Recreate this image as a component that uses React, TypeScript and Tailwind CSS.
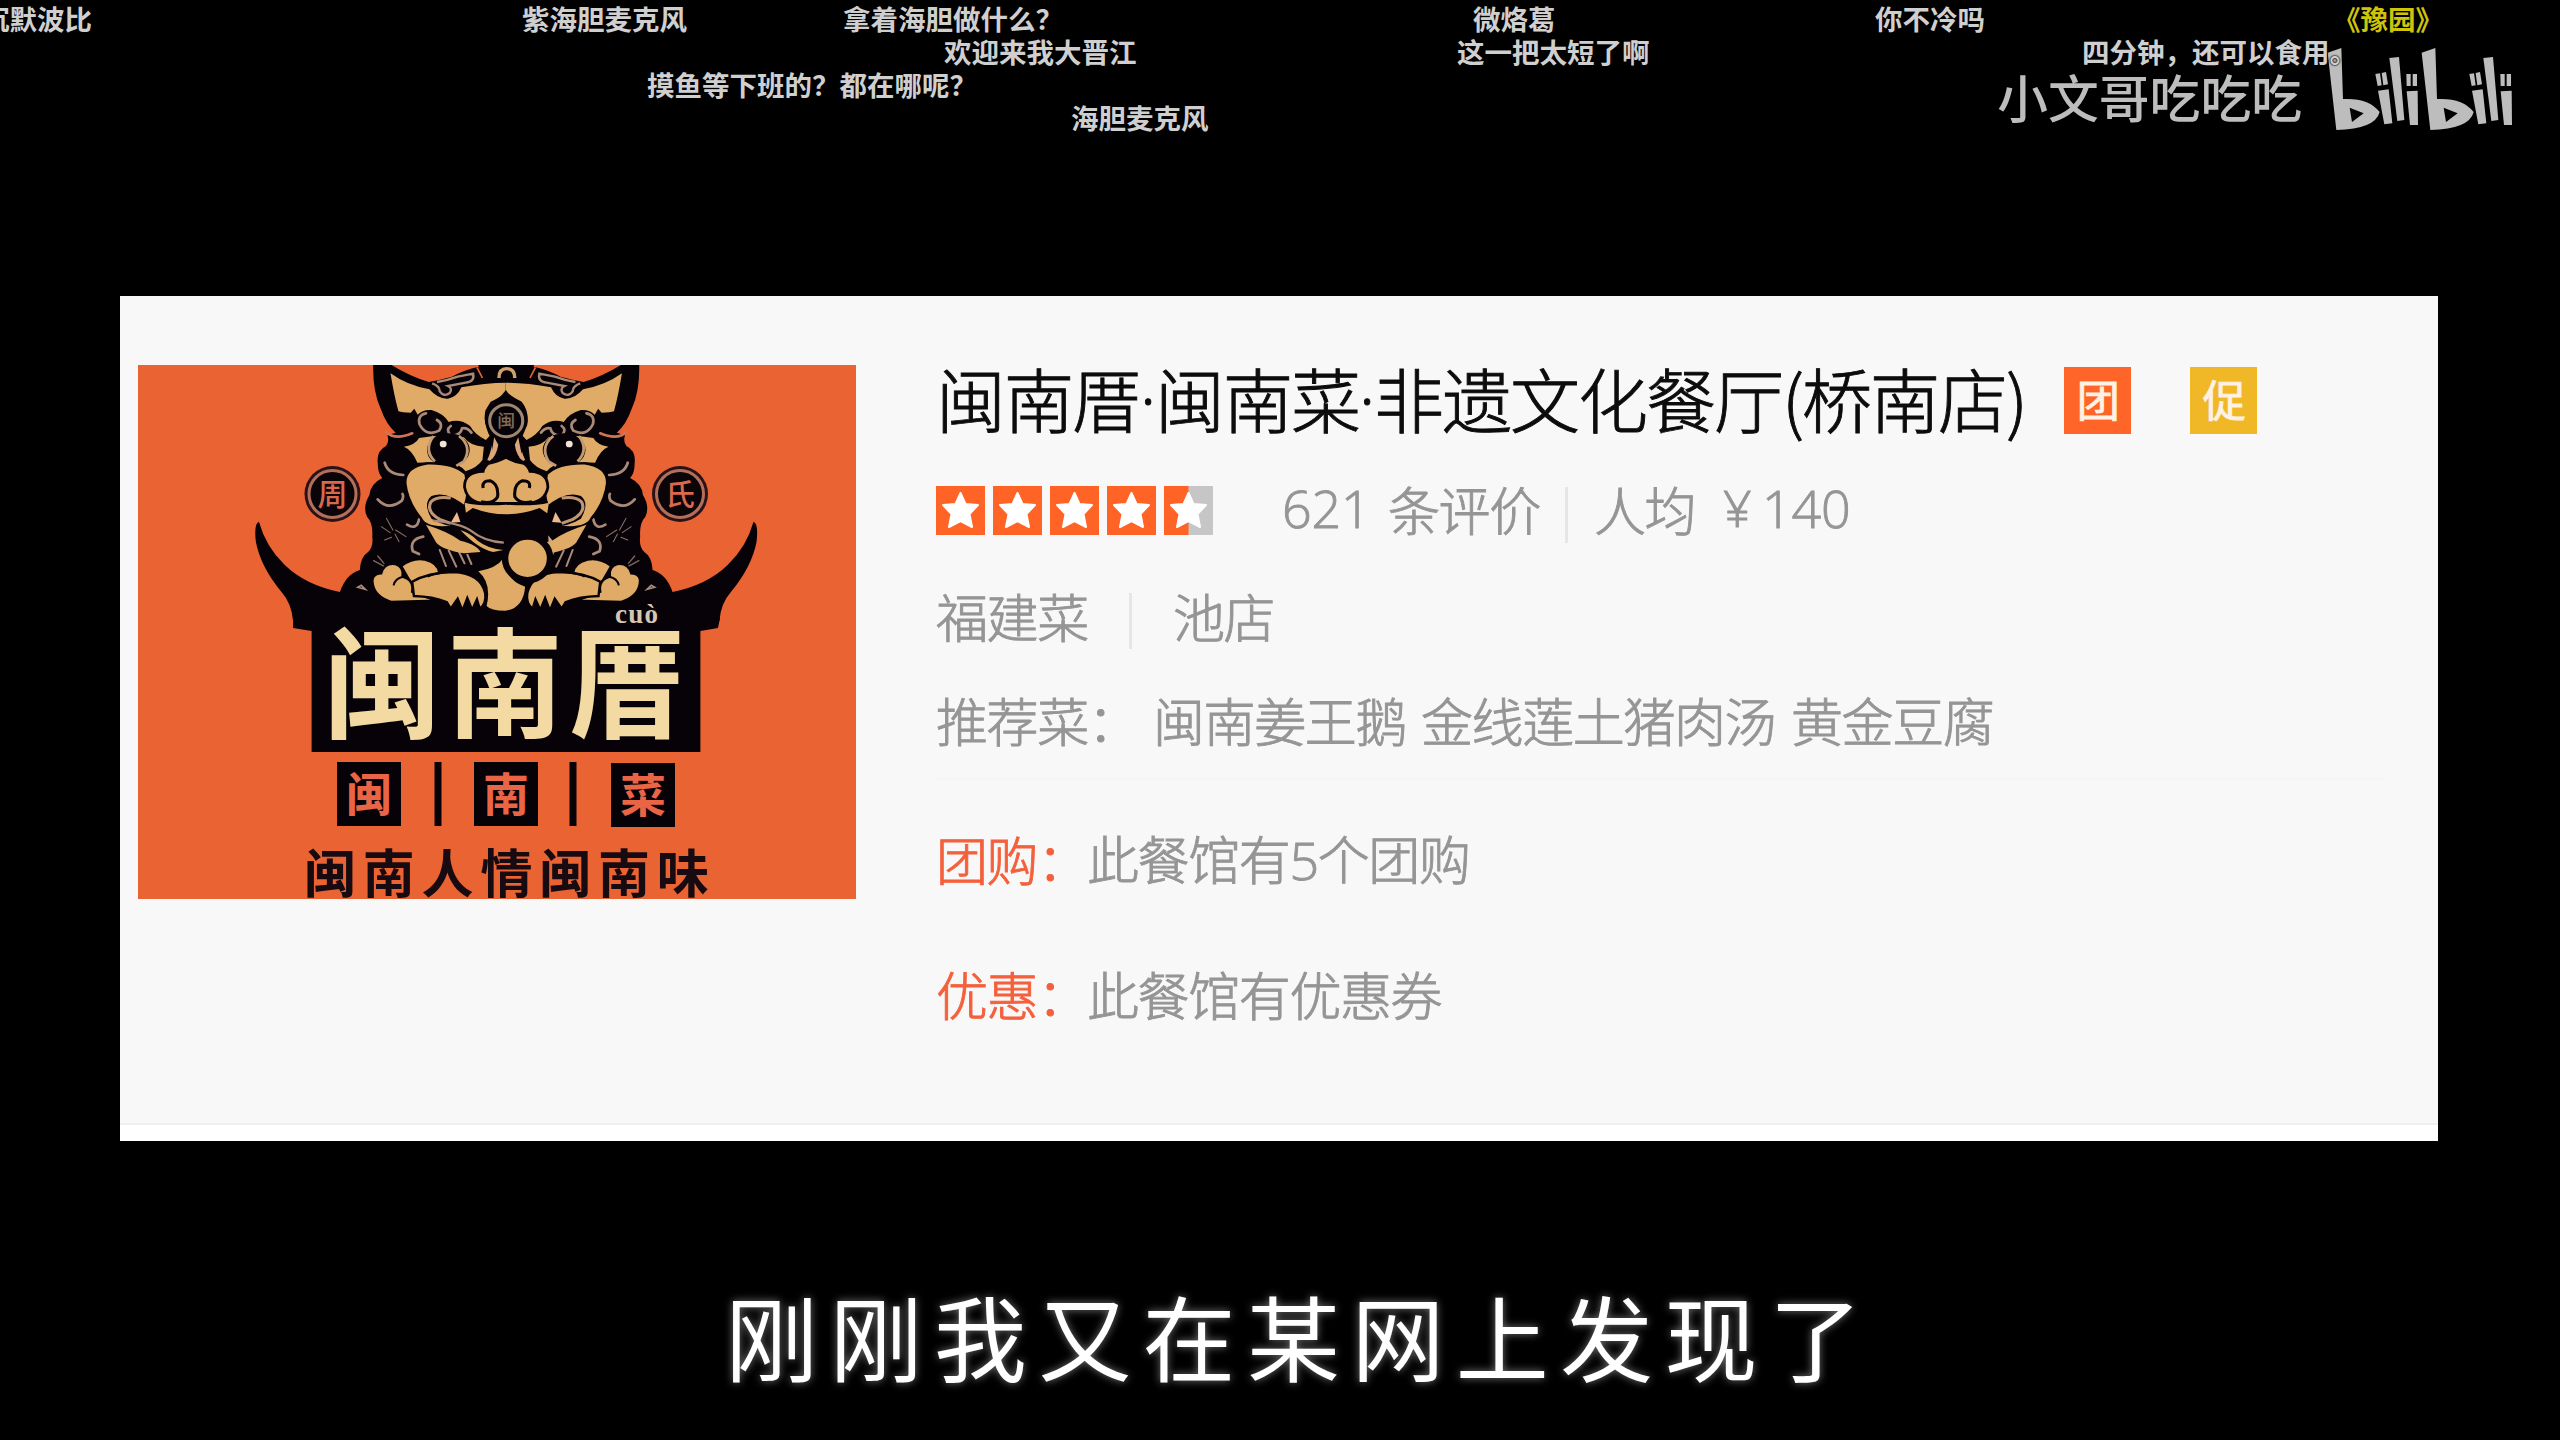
import React from "react";

const CJK = "font-['Noto_Sans_CJK_SC',sans-serif]";

type Comment = { text: string; place: string; color?: string };

const comments: Comment[] = [
  { text: "沉默波比", place: "left-[-18px] top-0" },
  { text: "紫海胆麦克风", place: "left-[522px] top-0" },
  { text: "拿着海胆做什么？", place: "left-[843px] top-0" },
  { text: "微烙葛", place: "left-[1473px] top-0" },
  { text: "你不冷吗", place: "left-[1875px] top-0" },
  { text: "《豫园》", place: "left-[2333px] top-0", color: "text-[#cfc40a]" },
  { text: "欢迎来我大晋江", place: "left-[944px] top-[33px]" },
  { text: "这一把太短了啊", place: "left-[1457px] top-[33px]" },
  { text: "四分钟，还可以食用。", place: "left-[2082px] top-[33px]" },
  { text: "摸鱼等下班的？都在哪呢？", place: "left-[647px] top-[66px]" },
  { text: "海胆麦克风", place: "left-[1071px] top-[99px]" },
];

function Danmaku() {
  return (
    <div className="absolute inset-x-0 top-0 h-[140px] overflow-hidden">
      {comments.map((c) => (
        <span
          key={c.text}
          className={`absolute whitespace-nowrap text-[27.5px] leading-[36px] font-bold [text-shadow:0_0_2px_#000,0_0_2px_#000] ${c.color ?? "text-[#cfcfcf]"} ${c.place}`}
        >
          {c.text}
        </span>
      ))}
    </div>
  );
}

function BiliHalf() {
  return (
    <>
      <path d="M82 68 L123 54 L128 207 Q205 203 238 246 Q225 297 108 300 Z M148 233 L155 276 L190 250 Z" fillRule="evenodd" />
      <path d="M225 132 L239 130 L244 166 L232 168 Z M244 129 L257 126 L263 163 L249 166 Z" />
      <path d="M233 182 L265 178 L276 280 L252 283 Z" />
      <path d="M267 84 L296 81 L312 270 L291 273 Z" />
      <path d="M318 132 L331 132 L331 168 L319 168 Z M337 132 L350 132 L350 168 L337 168 Z" />
      <path d="M319 184 L352 182 L353 285 L329 285 Z" />
    </>
  );
}

function Watermark() {
  return (
    <div className="absolute right-[44px] top-[46px] flex items-start text-[#bdbdbd]">
      <span className="mt-[15px] mr-[25px] whitespace-nowrap text-[50.8px] leading-[70px] font-medium">小文哥吃吃吃</span>
      <svg width="189" height="86" viewBox="80 48 567 258" fill="currentColor">
        <BiliHalf />
        <g transform="translate(282 0)">
          <BiliHalf />
        </g>
      </svg>
    </div>
  );
}

function LionHalf() {
  const tan = "#e0ab66";
  const dim = "#a98a78";
  return (
    <g>
      {/* mane, ear and roof horn */}
      <path
        fill="#060208"
        d="M775 40 L387 40 Q384 120 408 175 Q425 225 452 248 L428 256 Q434 275 424 288 Q396 302 400 340 Q400 370 413 384 Q378 402 376 435 Q355 470 369 500 Q387 520 384 560 Q388 590 372 606 Q350 620 348 660 Q308 672 290 726 Q190 705 130 645 Q75 590 55 515 Q40 520 46 575 Q60 650 120 725 Q150 760 154 812 L775 812 Z"
      />
      <path d="M432 40 Q490 78 548 96 Q580 90 615 80 Q650 60 694 50 L690 40 Z" fill="#ea6132" />
      {/* ear and brow */}
      <path
        fill={tan}
        d="M437 70 Q485 106 550 118 Q575 148 604 146 Q630 142 643 112 Q710 98 775 98 L775 125 Q750 145 728 155 Q706 185 712 220 L728 254 L714 270 Q682 254 668 228 Q640 205 606 216 Q590 190 556 180 Q530 178 516 194 L506 176 L496 188 Q470 188 460 184 Q448 140 437 70 Z"
      />
      <path d="M558 100 Q580 108 580 124 Q592 142 609 129 Q618 115 604 108 L655 98 Q682 96 677 71 L632 80 Q600 92 572 96" fill="none" stroke={dim} strokeWidth="7" />
      <path d="M688 52 L704 84" stroke="#ea6132" strokeWidth="5" />
      <g fill="none" stroke={dim} strokeWidth="8" strokeLinecap="round">
        <path d="M540 190 Q515 195 521 222 Q540 262 578 242 Q592 222 572 210" />
        <path d="M612 228 Q596 240 612 256 Q640 258 645 235 Q660 232 672 248" />
        <path d="M424 246 Q450 272 500 250" stroke="#cf7456" />
        <path d="M420 338 Q430 374 474 375" />
        <path d="M400 448 Q430 484 470 452 Q476 440 472 432" />
        <path d="M485 524 Q514 542 520 508" />
        <path d="M532 560 Q490 568 502 604 L520 612" />
        <path d="M580 600 L598 648 M606 602 L628 650 M636 606 L652 640 M660 614 L672 642" strokeWidth="6" />
        <path d="M410 530 L436 548 M425 505 L444 540 M450 552 L462 575 M452 540 L482 560 M420 570 L440 562" strokeWidth="3" stroke="#8b7360" />
        <path d="M388 632 L420 650 M400 618 L418 640" strokeWidth="4" stroke="#80675a" />
        <path d="M342 712 L352 706 L364 718 Z" strokeWidth="5" />
      </g>
      {/* eye */}
      <path d="M476 290 Q510 284 520 264 Q590 252 650 262 Q668 288 708 290 L704 330 Q690 352 655 364 Q640 340 600 344 Q570 334 515 338 Q500 300 476 290 Z" fill={tan} />
      <ellipse cx="605" cy="300" rx="62" ry="50" fill="#060208" />
      <path d="M562 258 Q532 300 566 334 M636 258 Q676 290 650 334 L628 348" fill="none" stroke="#c39a73" strokeWidth="8" />
      <path d="M608 255 Q650 290 632 335" fill="none" stroke="#060208" strokeWidth="8" />
      <circle cx="590" cy="282" r="10" fill="#f1e4d4" />
      {/* bridge of the nose */}
      <path d="M735 262 L752 284 Q745 320 724 332 L718 330 Q732 300 735 262 Z" fill="#dba77a" />
      {/* cheek and corner of the mouth */}
      <path
        fill={tan}
        stroke="#060208"
        strokeWidth="7"
        d="M655 372 Q620 338 545 340 Q478 350 480 400 Q486 455 525 505 Q540 540 620 530 L650 470 Q668 440 655 372 Z"
      />
      <path d="M660 472 Q600 420 556 438 Q530 460 556 506 Q590 528 640 532 L775 560 L775 470 Z" fill="#060208" />
      <path d="M612 444 Q570 438 554 456 Q540 485 580 508 L612 520" fill="none" stroke="#c19673" strokeWidth="9" />
      <path d="M612 518 L630 486 L640 516 Z" fill="#f0b890" />
      <path d="M540 524 Q605 545 640 572 Q690 585 698 606 L650 610 Q590 600 570 578 Z" fill={tan} />
      {/* paws */}
      <g fill={tan} stroke="#060208" strokeWidth="7">
        <path d="M468 648 Q510 616 552 634 Q584 650 578 684 L500 705 Z" />
        <path d="M386 705 Q378 672 410 670 Q418 638 450 642 Q478 652 472 680 Q506 690 500 725 L570 752 L440 756 Q392 740 386 705 Z" />
        <path d="M500 695 Q545 668 620 666 Q700 670 712 730 Q716 762 696 776 L688 748 L674 780 L660 744 L646 782 L632 746 L612 776 L600 756 Q560 740 505 738 Z" />
      </g>
      <path d="M446 706 Q450 685 474 680 M545 680 Q560 670 590 668" fill="none" stroke="#060208" strokeWidth="6" />
    </g>
  );
}

function Seal({ x, label }: { x: number; label: string }) {
  return (
    <g>
      <circle cx={x} cy="494" r="28" fill="#2a1218" />
      <circle cx={x} cy="494" r="23.5" fill="#0b0409" stroke="#b2705a" strokeWidth="3" />
      <text x={x} y="505" textAnchor="middle" fontSize="30" fontWeight="500" fill="#d9684c">
        {label}
      </text>
    </g>
  );
}

function ShopPicture() {
  const tan = "#e0ab66";
  return (
    <svg width="718" height="534" viewBox="138 365 718 534" className={`block shrink-0 bg-[#ea6333] ${CJK}`}>
      <g transform="translate(240 350) scale(0.34439 0.33333)">
        <LionHalf />
        <g transform="translate(1546 0) scale(-1 1)">
          <LionHalf />
        </g>
        <path d="M752 84 Q752 56 774 56 Q798 56 798 84" fill="none" stroke="#cfa06c" strokeWidth="10" />
        {/* forehead medallion */}
        <path d="M772 120 Q785 142 815 155 Q840 185 834 225 L818 264 L822 300 L806 334 L773 318 L738 334 L728 264 Q704 220 713 180 Q730 155 755 142 Z" fill="#060208" />
        <path d="M738 262 L750 284 Q745 318 724 334 Q734 300 738 262 Z M808 262 L798 284 Q802 318 824 334 Q814 300 808 262 Z" fill="#dba77a" />
        <circle cx="773" cy="212" r="48" fill="#060208" stroke="#9f8672" strokeWidth="9" />
        <text x="773" y="231" textAnchor="middle" fontSize="52" fontWeight="500" fill="#806a58">闽</text>
        {/* snout */}
        <path
          fill={tan}
          stroke="#060208"
          strokeWidth="8"
          d="M773 322 Q745 336 722 340 Q708 352 706 364 Q650 366 652 412 Q662 462 715 460 L832 460 Q886 458 894 412 Q894 366 842 364 Q838 350 824 340 Q795 336 773 322 Z"
        />
        <path d="M706 414 Q702 392 726 392 Q752 402 748 440 Q735 464 700 455 M840 414 Q846 392 820 392 Q794 402 798 440 Q812 464 848 455" fill="none" stroke="#060208" strokeWidth="9" />
        <path d="M652 458 L656 488 L676 474 Q772 512 870 474 L892 490 L897 458 Q850 470 773 464 Q700 470 652 458 Z" fill={tan} />
        {/* lip, ball and chest */}
        <path d="M560 512 Q640 520 670 542 Q710 575 766 578" fill="none" stroke="#a98a78" strokeWidth="7" />
        <path d="M640 540 Q670 550 690 572 Q720 596 765 600 L735 606 Q690 596 640 540 Z" fill={tan} />
        <path d="M692 664 Q745 655 765 625 Q770 690 828 710 Q822 776 770 782 Q728 782 716 768 Q732 700 692 664 Z" fill={tan} />
        <circle cx="835" cy="625" r="75" fill="#060208" />
        <circle cx="835" cy="625" r="56" fill={tan} />
        <path d="M895 556 L908 572 L896 578 Z" fill="#c9a98c" />
      </g>
      <Seal x={332.5} label="周" />
      <Seal x={680} label="氏" />
      {/* sign board */}
      <path d="M293 618 L293 628 L311.6 631 L311.6 752 L700.4 752 L700.4 631 L718 628 L720 618 Z" fill="#060208" />
      <text x="615" y="623" fontSize="27" fontWeight="700" fill="#d6c7b2" fontFamily="Liberation Serif" textLength="43">cuò</text>
      <g fill="#f3daa2" fontSize="116" fontWeight="700" textAnchor="middle">
        <text transform="translate(382 729) scale(1 1.04)">闽</text>
        <text transform="translate(505 729) scale(1 1.04)">南</text>
        <text transform="translate(627 729) scale(1 1.04)">厝</text>
      </g>
      <g fill="#060208">
        <rect x="337" y="762" width="64" height="64" />
        <rect x="474" y="762" width="64" height="64" />
        <rect x="611" y="763" width="64" height="64" />
        <rect x="434.5" y="762" width="7" height="64" />
        <rect x="569.5" y="762" width="7" height="64" />
      </g>
      <g fill="#ea6545" fontSize="46" fontWeight="700" textAnchor="middle">
        <text x="369" y="811">闽</text>
        <text x="506" y="811">南</text>
        <text x="643" y="812">菜</text>
      </g>
      <text x="304" y="893" fontSize="52" fontWeight="700" letterSpacing="6.8" fill="#170a10">闽南人情闽南味</text>
    </svg>
  );
}

function Star({ half }: { half?: boolean }) {
  return (
    <svg width="49" height="49" viewBox="0 0 49 49" className="shrink-0">
      <rect width="49" height="49" fill="#ff6325" />
      {half && <rect x="24.5" width="24.5" height="49" fill="#c6c6c6" />}
      <path
        d="M24.5 7 L29.5 18 L42 19 L33.5 28 L36 41 L24.5 35 L13 41 L15.5 28 L7 19 L19.5 18 Z"
        fill="#fff"
        stroke="#fff"
        strokeWidth="2"
        strokeLinejoin="round"
      />
    </svg>
  );
}

function Divider({ className }: { className: string }) {
  return <span className={`h-[56px] w-[3px] shrink-0 bg-[#e6e6ea] ${className}`} />;
}

function Tag({ label, className }: { label: string; className: string }) {
  return (
    <span className={`flex size-[67px] shrink-0 items-center justify-center pb-[3px] text-[43px] leading-none font-normal text-[#fff1e4] ${className}`}>
      {label}
    </span>
  );
}

function Deal({ label, className, children }: { label: string; className: string; children: React.ReactNode }) {
  return (
    <div className={`flex h-[60px] items-center ${className}`}>
      <span className="w-[151px] shrink-0 text-[#f5603c]">{label}</span>
      <span>{children}</span>
    </div>
  );
}

function ShopCard() {
  return (
    <section className="mt-[296px] ml-[120px] h-[845px] w-[2318px] bg-white">
      <div className="flex h-[829px] border-b-2 border-[#efefef] bg-[#f8f8f8] pt-[69px] pl-[18px]">
        <ShopPicture />
        <div className="ml-[80px] flex flex-col text-[52px] leading-[60px] font-light tracking-[-1.4px] whitespace-nowrap text-[#959595] [-webkit-text-stroke:0.9px_currentColor]">
          <div className="mt-px flex h-[68px] items-center">
            <h1 className="-mt-[4px] flex w-[1128px] shrink-0 text-[70px] leading-[68px] font-light tracking-[-2px] text-[#0c0c0c]">
              <span className="w-[203px]">闽南厝</span>
              <span className="w-[16px] text-center font-['Open_Sans']">·</span>
              <span className="w-[203px]">闽南菜</span>
              <span className="w-[16px] text-center font-['Open_Sans']">·</span>
              <span className="w-[408px]">非遗文化餐厅</span>
              <span className="w-[20px]">(</span>
              <span className="w-[204px]">桥南店</span>
              <span>)</span>
            </h1>
            <Tag label="团" className="bg-[#ff6428]" />
            <Tag label="促" className="ml-[59px] bg-[#f0b826]" />
          </div>

          <div className="mt-[46px] flex h-[60px] items-center">
            <div className="flex w-[346px] shrink-0 gap-[8px]">
              <Star />
              <Star />
              <Star />
              <Star />
              <Star half />
            </div>
            <span className="-mt-[4px] w-[106px] shrink-0 font-['Open_Sans'] tracking-[-0.2px]">621</span>
            <span className="-mt-[2px] w-[152px] shrink-0">条评价</span>
            <Divider className="mt-[10px] ml-[25px]" />
            <span className="-mt-[2px] ml-[26px] w-[129px] shrink-0">人均</span>
            <span className="-mt-[4px] w-[39px] shrink-0 font-['Open_Sans'] text-[50px]">¥</span>
            <span className="-mt-[4px] font-['Open_Sans'] tracking-[-0.2px]">140</span>
          </div>

          <div className="mt-[46px] flex h-[60px] items-center">
            <span className="w-[152px] shrink-0">福建菜</span>
            <Divider className="mt-[10px] ml-[41px]" />
            <span className="ml-[41px]">池店</span>
          </div>

          <div className="mt-[44px] flex h-[60px] items-center">
            <span className="w-[217px] shrink-0">推荐菜：</span>
            <span className="w-[268px] shrink-0">闽南姜王鹅</span>
            <span className="w-[370px] shrink-0">金线莲土猪肉汤</span>
            <span>黄金豆腐</span>
          </div>

          <div className="mt-[28px] h-[2px] w-[1450px] bg-[#f5f5f5]" />
          <Deal label="团购：" className="mt-[49px]">
            此餐馆有<span className="font-['Open_Sans']">5</span>个团购
          </Deal>
          <Deal label="优惠：" className="mt-[75px]">此餐馆有优惠券</Deal>
        </div>
      </div>
    </section>
  );
}

export default function App() {
  return (
    <main className={`relative h-[1440px] w-[2560px] overflow-hidden bg-black ${CJK}`}>
      <Watermark />
      <Danmaku />
      <ShopCard />
      <p className="mt-[140px] ml-[725px] text-[93px] leading-[108px] tracking-[11.4px] whitespace-nowrap text-white [text-shadow:0_0_8px_#777]">
        刚刚我又在某网上发现了
      </p>
    </main>
  );
}
